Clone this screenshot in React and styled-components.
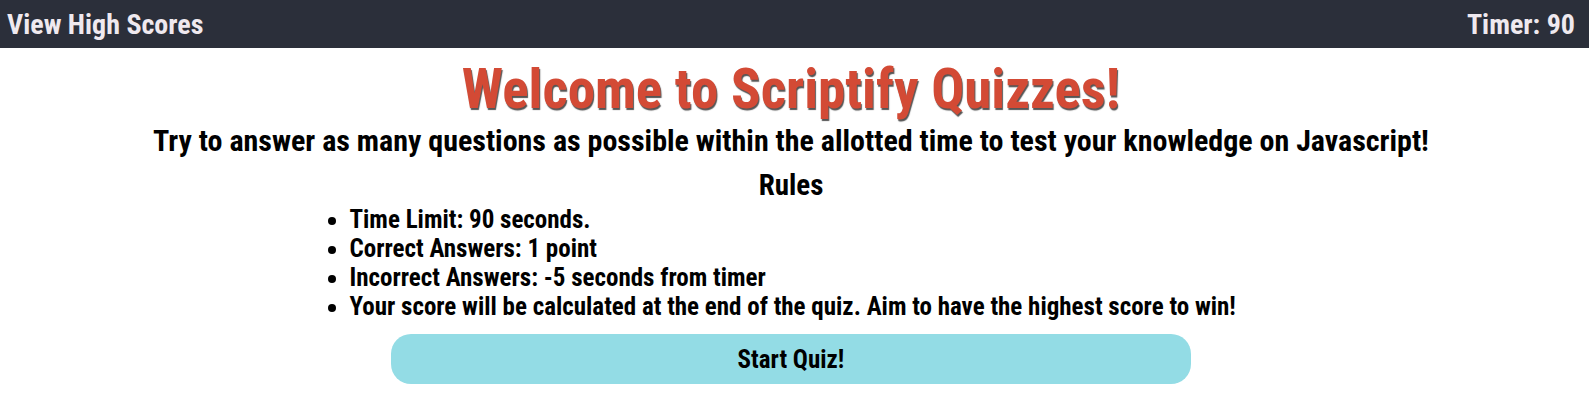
import React from "react";
import styled, { createGlobalStyle } from "styled-components";

const Global = createGlobalStyle`
  body {
    margin: 0;
    background: #ffffff;
    font-family: "Roboto", "Liberation Sans", sans-serif;
    font-stretch: 75%;
  }
`;

const rules = [
  "Time Limit: 90 seconds.",
  "Correct Answers: 1 point",
  "Incorrect Answers: -5 seconds from timer",
  "Your score will be calculated at the end of the quiz. Aim to have the highest score to win!",
];

const App = () => {
  return (
    <>
      <Global />
      <Header>
        <NavLink>View High Scores</NavLink>
        <Timer>Timer: 90</Timer>
      </Header>
      <Main>
        <Title>Welcome to Scriptify Quizzes!</Title>
        <Intro>
          Try to answer as many questions as possible within the allotted time to test your knowledge on Javascript!
        </Intro>
        <RulesHeading>Rules</RulesHeading>
        <RuleList>
          {rules.map((r) => (
            <li key={r}>{r}</li>
          ))}
        </RuleList>
        <StartButton>Start Quiz!</StartButton>
      </Main>
    </>
  );
};

export default App;

const Header = styled.header`
  display: flex;
  justify-content: space-between;
  align-items: center;
  height: 48px;
  padding: 0 14px 0 7px;
  background: #2b2f3a;
  color: #efe9ef;
  font-weight: 700;
  font-size: 28px;
`;

const NavLink = styled.span`
  cursor: pointer;
`;

const Timer = styled.span``;

const Main = styled.main`
  display: flex;
  flex-direction: column;
  align-items: center;
  padding-right: 7px;
  color: #000;
`;

const Title = styled.h1`
  margin: 9px 0 2px;
  font-size: 55px;
  font-weight: 700;
  color: #d34a35;
  text-shadow: 1px 2px 1px #555;
`;

const Intro = styled.h2`
  margin: 0;
  font-size: 30px;
  font-weight: 700;
`;

const RulesHeading = styled.h3`
  margin: 10px 0 0;
  font-size: 29px;
  font-weight: 700;
`;

const RuleList = styled.ul`
  width: 963px;
  margin: 3px auto 0;
  padding-left: 40px;
  box-sizing: border-box;
  font-size: 25px;
  font-weight: 700;
  line-height: 29px;
`;

const StartButton = styled.button`
  width: 800px;
  height: 50px;
  margin-top: 13px;
  border: none;
  border-radius: 20px;
  background: #93dce5;
  font-family: inherit;
  font-stretch: 75%;
  font-size: 25px;
  font-weight: 700;
  color: #000;
  cursor: pointer;
`;
